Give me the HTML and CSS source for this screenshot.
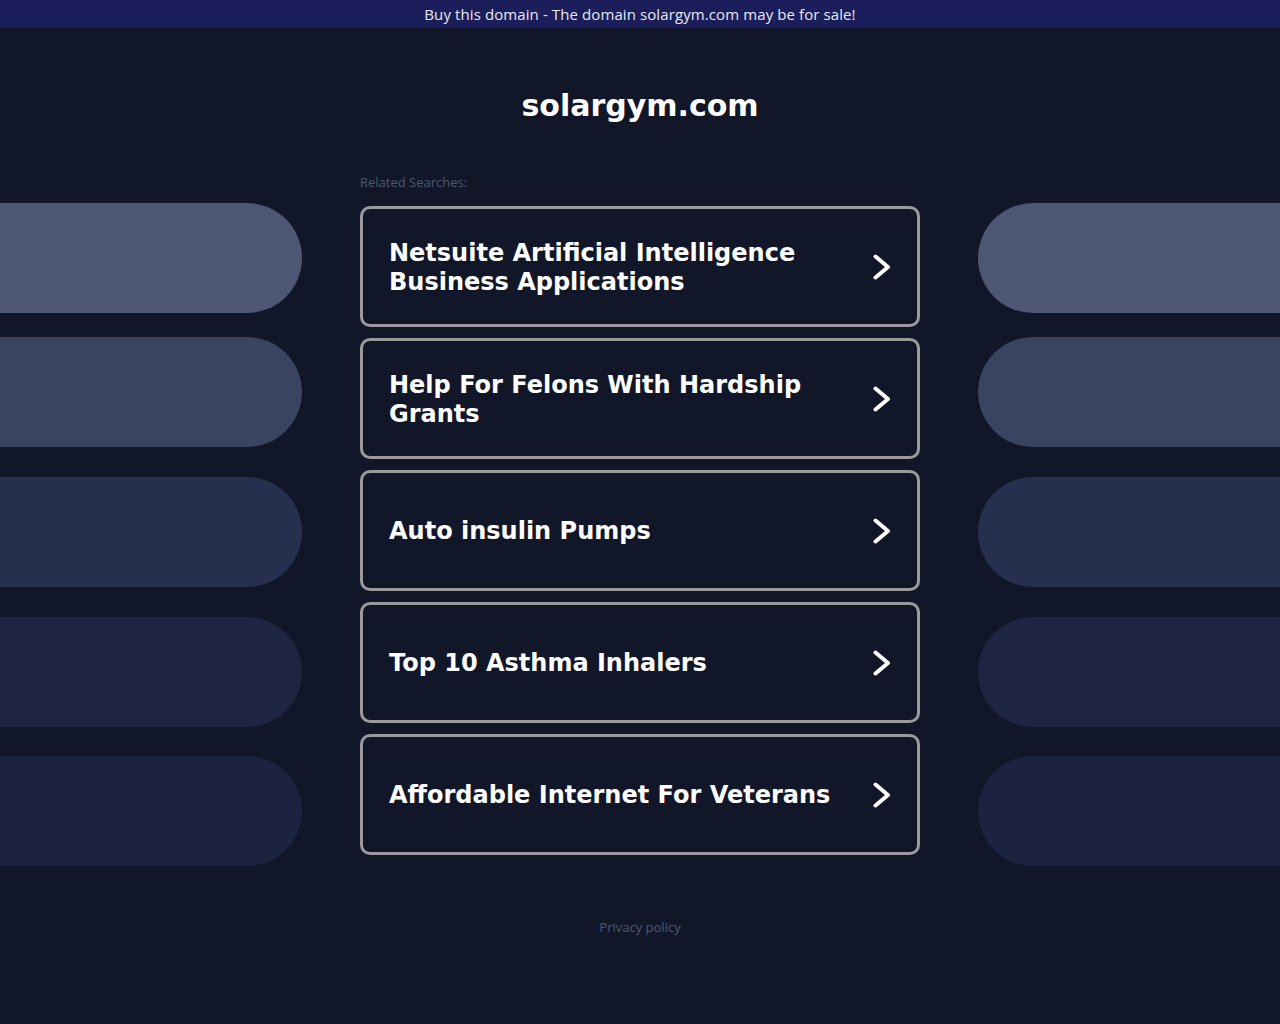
FILE: index.html
```html
<!DOCTYPE html>
<html lang="en">
<head>
    <meta charset="UTF-8">
    <meta name="viewport" content="width=device-width, initial-scale=1.0">
    <title>solargym.com</title>
    <link rel="stylesheet" href="styles.css">
</head>
<body>
    <div id="sale-bar">Buy this domain - The domain solargym.com may be for sale!</div>

    <h1 id="domain-title">solargym.com</h1>

    <div id="main">
        <div class="side side-left">
            <div class="pill pill-1"></div>
            <div class="pill pill-2"></div>
            <div class="pill pill-3"></div>
            <div class="pill pill-4"></div>
            <div class="pill pill-5"></div>
        </div>

        <div id="searches">
            <div id="searches-label">Related Searches:</div>

            <a class="search-card" href="#">
                <span class="search-text">Netsuite Artificial Intelligence Business Applications</span>
                <svg class="chevron" viewBox="0 0 18 26" width="18" height="26"><path d="M2.5 2.5 L15 13 L2.5 23.5"/></svg>
            </a>
            <a class="search-card" href="#">
                <span class="search-text">Help For Felons With Hardship Grants</span>
                <svg class="chevron" viewBox="0 0 18 26" width="18" height="26"><path d="M2.5 2.5 L15 13 L2.5 23.5"/></svg>
            </a>
            <a class="search-card" href="#">
                <span class="search-text">Auto insulin Pumps</span>
                <svg class="chevron" viewBox="0 0 18 26" width="18" height="26"><path d="M2.5 2.5 L15 13 L2.5 23.5"/></svg>
            </a>
            <a class="search-card" href="#">
                <span class="search-text">Top 10 Asthma Inhalers</span>
                <svg class="chevron" viewBox="0 0 18 26" width="18" height="26"><path d="M2.5 2.5 L15 13 L2.5 23.5"/></svg>
            </a>
            <a class="search-card" href="#">
                <span class="search-text">Affordable Internet For Veterans</span>
                <svg class="chevron" viewBox="0 0 18 26" width="18" height="26"><path d="M2.5 2.5 L15 13 L2.5 23.5"/></svg>
            </a>
        </div>

        <div class="side side-right">
            <div class="pill pill-1"></div>
            <div class="pill pill-2"></div>
            <div class="pill pill-3"></div>
            <div class="pill pill-4"></div>
            <div class="pill pill-5"></div>
        </div>
    </div>

    <div id="footer">
        <a href="#">Privacy policy</a>
    </div>
</body>
</html>
```

FILE: styles.css
```css
body {
    margin: 0;
    background-color: #111729;
    font-family: "DejaVu Sans", sans-serif;
    color: #fff;
}

#sale-bar {
    height: 28px;
    line-height: 28px;
    text-align: center;
    background-color: #1b1e5b;
    font-family: "Open Sans", sans-serif;
    font-size: 15px;
    letter-spacing: 0.1px;
    color: #e8e9f2;
}

#domain-title {
    margin: 60px 0 41px;
    font-size: 30px;
    line-height: 36px;
    text-align: center;
    font-weight: bold;
}

#main {
    display: flex;
    justify-content: space-between;
    align-items: flex-start;
}

.side {
    width: 302px;
    padding-top: 38px;
    display: flex;
    flex-direction: column;
}

.pill {
    height: 110px;
}

.side-left .pill {
    border-radius: 0 55px 55px 0;
}

.side-right .pill {
    border-radius: 55px 0 0 55px;
}

.pill-1 { background-color: #4d5774; }
.pill-2 { background-color: #3a4461; margin-top: 24px; }
.pill-3 { background-color: #262f4d; margin-top: 30px; }
.pill-4 { background-color: #1d2543; margin-top: 30px; }
.pill-5 { background-color: #1b2341; margin-top: 29px; }

#searches {
    width: 560px;
}

#searches-label {
    margin: 9px 0 16px;
    font-family: "Open Sans", sans-serif;
    font-size: 13px;
    line-height: 16px;
    color: #4f5872;
}

.search-card {
    box-sizing: border-box;
    height: 121px;
    margin-bottom: 11px;
    padding: 0 26px;
    display: flex;
    align-items: center;
    justify-content: space-between;
    border: 3px solid #9b9b9d;
    border-radius: 10px;
    color: #fff;
    text-decoration: none;
}

.search-text {
    font-size: 24px;
    line-height: 29px;
    font-weight: bold;
    padding-top: 2px;
    padding-right: 30px;
}

.chevron {
    flex-shrink: 0;
    fill: none;
    stroke: #fff;
    stroke-width: 4;
    stroke-linecap: round;
    stroke-linejoin: round;
}

#footer {
    margin-top: 53px;
    text-align: center;
    font-family: "Open Sans", sans-serif;
    font-size: 13px;
    line-height: 16px;
}

#footer a {
    color: #4f5872;
    text-decoration: none;
}
```
